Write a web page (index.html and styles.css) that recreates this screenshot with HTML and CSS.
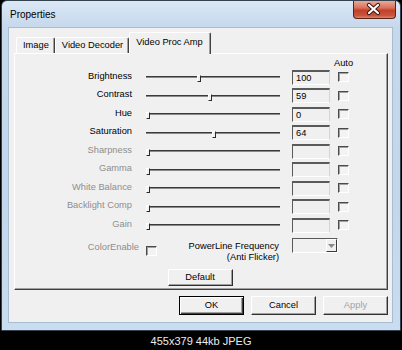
FILE: index.html
```html
<!DOCTYPE html>
<html>
<head>
<meta charset="utf-8">
<link rel="stylesheet" href="styles.css">
</head>
<body>
<div class="window">
  <div class="titlebar">
    <span class="title">Properties</span>
    <div class="close">
      <svg width="43" height="18" viewBox="0 0 43 18">
        <path d="M17 5 L26 13 M26 5 L17 13" stroke="#3b1510" stroke-width="4.2" stroke-linecap="round" fill="none"/>
        <path d="M17 5 L26 13 M26 5 L17 13" stroke="#ffffff" stroke-width="2.2" stroke-linecap="round" fill="none"/>
      </svg>
    </div>
  </div>
  <div class="frame-body">
    <div class="client">
      <div class="tabs">
        <div class="tab">Image</div>
        <div class="tab">Video Decoder</div>
        <div class="tab active">Video Proc Amp</div>
      </div>
      <div class="panel">
        <div class="grid">
          <div class="auto-head">Auto</div>

          <div class="label">Brightness</div>
          <div class="slider"><div class="track"></div><div class="thumb" style="left:51px"></div></div>
          <div class="edit">100</div>
          <div class="check"></div>

          <div class="label">Contrast</div>
          <div class="slider"><div class="track"></div><div class="thumb" style="left:62px"></div></div>
          <div class="edit">59</div>
          <div class="check"></div>

          <div class="label">Hue</div>
          <div class="slider"><div class="track"></div><div class="thumb" style="left:0px"></div></div>
          <div class="edit">0</div>
          <div class="check"></div>

          <div class="label">Saturation</div>
          <div class="slider"><div class="track"></div><div class="thumb" style="left:66px"></div></div>
          <div class="edit">64</div>
          <div class="check"></div>

          <div class="label disabled">Sharpness</div>
          <div class="slider"><div class="track"></div><div class="thumb" style="left:0px"></div></div>
          <div class="edit"></div>
          <div class="check"></div>

          <div class="label disabled">Gamma</div>
          <div class="slider"><div class="track"></div><div class="thumb" style="left:0px"></div></div>
          <div class="edit"></div>
          <div class="check"></div>

          <div class="label disabled">White Balance</div>
          <div class="slider"><div class="track"></div><div class="thumb" style="left:0px"></div></div>
          <div class="edit"></div>
          <div class="check"></div>

          <div class="label disabled">Backlight Comp</div>
          <div class="slider"><div class="track"></div><div class="thumb" style="left:0px"></div></div>
          <div class="edit"></div>
          <div class="check"></div>

          <div class="label disabled">Gain</div>
          <div class="slider"><div class="track"></div><div class="thumb" style="left:0px"></div></div>
          <div class="edit"></div>
          <div class="check"></div>

          <div class="label disabled last-label">ColorEnable</div>
          <div class="split">
            <div class="check last-check"></div>
            <div class="powerline">PowerLine Frequency<br>(Anti Flicker)</div>
          </div>
          <div class="combo"><div class="combo-btn"><svg width="7" height="4" viewBox="0 0 7 4"><path d="M0 0 H7 L3.5 4 Z" fill="#8a8a8a"/></svg></div></div>
        </div>
        <div class="default-row"><div class="btn default">Default</div></div>
      </div>
      <div class="actions">
        <div class="btn ok">OK</div>
        <div class="btn">Cancel</div>
        <div class="btn disabled-btn">Apply</div>
      </div>
    </div>
  </div>
</div>
<div class="caption">455x379 44kb JPEG</div>
</body>
</html>
```
FILE: styles.css
```css
html, body {
  margin: 0;
  padding: 0;
}
body {
  background: #000;
  width: 402px;
  height: 350px;
  overflow: hidden;
  font-family: "Liberation Sans", Arial, sans-serif;
  font-size: 9.3px;
  color: #000;
}
.window {
  box-sizing: border-box;
  margin-left: 1px;
  width: 400px;
  height: 331px;
  border: 1px solid #34414f;
  border-radius: 6px 6px 0 0;
  background: linear-gradient(to bottom, #dbe8f6 0, #c6d8ec 26px, #c3d6eb 60%, #cadcef 100%);
  display: flex;
  flex-direction: column;
}
.titlebar {
  height: 26px;
  flex: none;
  display: flex;
  align-items: flex-start;
  padding: 0 4px 0 8px;
}
.title {
  font-size: 10px;
  line-height: 27px;
  color: #000;
}
.close {
  margin-left: auto;
  width: 43px;
  height: 18px;
  box-sizing: border-box;
  border: 1px solid #5c2216;
  border-top: none;
  border-radius: 0 0 4px 4px;
  background: linear-gradient(to bottom, #e9a898 0, #d9725c 40%, #c2402a 55%, #c8553d 85%, #d98670 100%);
  display: flex;
  align-items: center;
  justify-content: center;
}
.close svg {
  display: block;
  margin-left: -2px;
  margin-top: -1px;
}
.frame-body {
  flex: 1;
  padding: 0 7px 7px 6px;
}
.client {
  box-sizing: border-box;
  height: 296px;
  border: 1px solid #a8bcd2;
  background: #f0f0f0;
  padding: 4px 4px 7px 5px;
  display: flex;
  flex-direction: column;
}
.tabs {
  height: 21px;
  flex: none;
  display: flex;
  align-items: flex-end;
  padding-left: 2px;
  position: relative;
  z-index: 1;
}
.tab {
  box-sizing: border-box;
  height: 16px;
  line-height: 15px;
  padding: 0 5px 0 6px;
  border-top: 1px solid #ffffff;
  border-left: 1px solid #ffffff;
  border-right: 1px solid #404040;
  box-shadow: inset -1px 0 #a0a0a0;
  background: #f0f0f0;
  border-radius: 2px 2px 0 0;
}
.tab.active {
  height: 22px;
  margin-bottom: -1px;
  line-height: 19px;
  padding: 0 7px 0 6px;
  margin-left: 0;
}
.panel {
  box-sizing: border-box;
  height: 237px;
  flex: none;
  border-top: 1px solid #ffffff;
  border-left: 1px solid #ffffff;
  border-right: 1px solid #404040;
  border-bottom: 1px solid #404040;
  box-shadow: inset -1px -1px #a0a0a0;
  padding-top: 4px;
  display: flex;
  flex-direction: column;
}
.grid {
  display: grid;
  grid-template-columns: 131px 146px 46px 11px;
  grid-template-rows: 10px repeat(9, 18.5px) 26px;
}
.auto-head {
  grid-column: 4;
  margin: 0 -12px;
  text-align: center;
  white-space: nowrap;
  line-height: 10px;
}
.label {
  grid-column: 1;
  text-align: right;
  padding-right: 14px;
  white-space: nowrap;
  align-self: center;
  line-height: 11px;
  margin-top: -2px;
}
.disabled {
  color: #8e8e8e;
}
.slider {
  grid-column: 2;
  width: 134px;
  position: relative;
  display: flex;
  align-items: center;
}
.track {
  flex: 1;
  height: 2px;
  box-sizing: border-box;
  border-top: 1px solid #3a3a3a;
  border-bottom: 1px solid #8a8a8a;
}
.thumb {
  position: absolute;
  top: calc(50% - 2px);
  width: 4px;
  height: 7px;
  box-sizing: border-box;
  border-top: 1px solid #ffffff;
  border-left: 1px solid #ffffff;
  border-right: 1px solid #2a2a2a;
  border-bottom: 1px solid #2a2a2a;
  background: #f0f0f0;
}
.edit {
  grid-column: 3;
  width: 38px;
  height: 15px;
  box-sizing: border-box;
  align-self: center;
  border-top: 2px solid #5a5a5a;
  border-left: 1px solid #5a5a5a;
  border-right: 1px solid #d4d4d4;
  border-bottom: 1px solid #ffffff;
  background: #f0f0f0;
  padding-left: 3px;
  line-height: 12px;
}
.check {
  width: 11px;
  height: 10px;
  box-sizing: border-box;
  align-self: center;
  border-top: 1px solid #4a4a4a;
  border-left: 1px solid #4a4a4a;
  border-right: 1px solid #ffffff;
  border-bottom: 1px solid #ffffff;
  box-shadow: inset 1px 1px #a0a0a0;
  background: #f3f3f3;
}
.grid > .check {
  grid-column: 4;
}
.last-label {
  align-self: start;
  margin-top: 7px;
  padding-right: 7px;
}
.split {
  grid-column: 2;
  display: flex;
  justify-content: space-between;
  align-items: flex-start;
  padding-right: 13px;
}
.last-check {
  margin-top: 7.5px;
}
.powerline {
  margin-top: 6px;
  text-align: right;
  line-height: 11px;
  white-space: nowrap;
}
.combo {
  grid-column: 3;
  align-self: start;
  margin-top: 3.5px;
  width: 46px;
  height: 15px;
  box-sizing: border-box;
  border-top: 1px solid #5a5a5a;
  border-left: 1px solid #5a5a5a;
  border-right: 1px solid #ffffff;
  border-bottom: 1px solid #ffffff;
  background: #f0f0f0;
  display: flex;
  justify-content: flex-end;
}
.combo-btn {
  width: 11px;
  height: 13px;
  box-sizing: border-box;
  border-top: 1px solid #ffffff;
  border-left: 1px solid #ffffff;
  border-right: 1px solid #3a3a3a;
  border-bottom: 1px solid #3a3a3a;
  display: flex;
  align-items: center;
  justify-content: center;
}
.combo-btn svg {
  display: block;
}
.default-row {
  margin-top: 8.5px;
  display: flex;
  justify-content: center;
}
.btn {
  box-sizing: border-box;
  width: 65px;
  height: 19px;
  border-top: 1px solid #ffffff;
  border-left: 1px solid #ffffff;
  border-right: 1px solid #303030;
  border-bottom: 1px solid #303030;
  box-shadow: inset -1px -1px #a0a0a0;
  background: #f0f0f0;
  display: flex;
  align-items: center;
  justify-content: center;
  line-height: 11px;
}
.btn.default {
  height: 17px;
  margin-left: -2px;
}
.btn.ok {
  border: 1px solid #000;
  box-shadow: inset 1px 1px #ffffff, inset -1px -1px #404040, inset -2px -2px #a0a0a0;
}
.btn.disabled-btn {
  color: #a3a3a3;
}
.actions {
  margin-top: 6px;
  display: flex;
  justify-content: flex-end;
  gap: 7px;
}
.caption {
  height: 19px;
  line-height: 19px;
  padding-top: 1px;
  text-align: center;
  color: #ececec;
  font-size: 11px;
}
```
